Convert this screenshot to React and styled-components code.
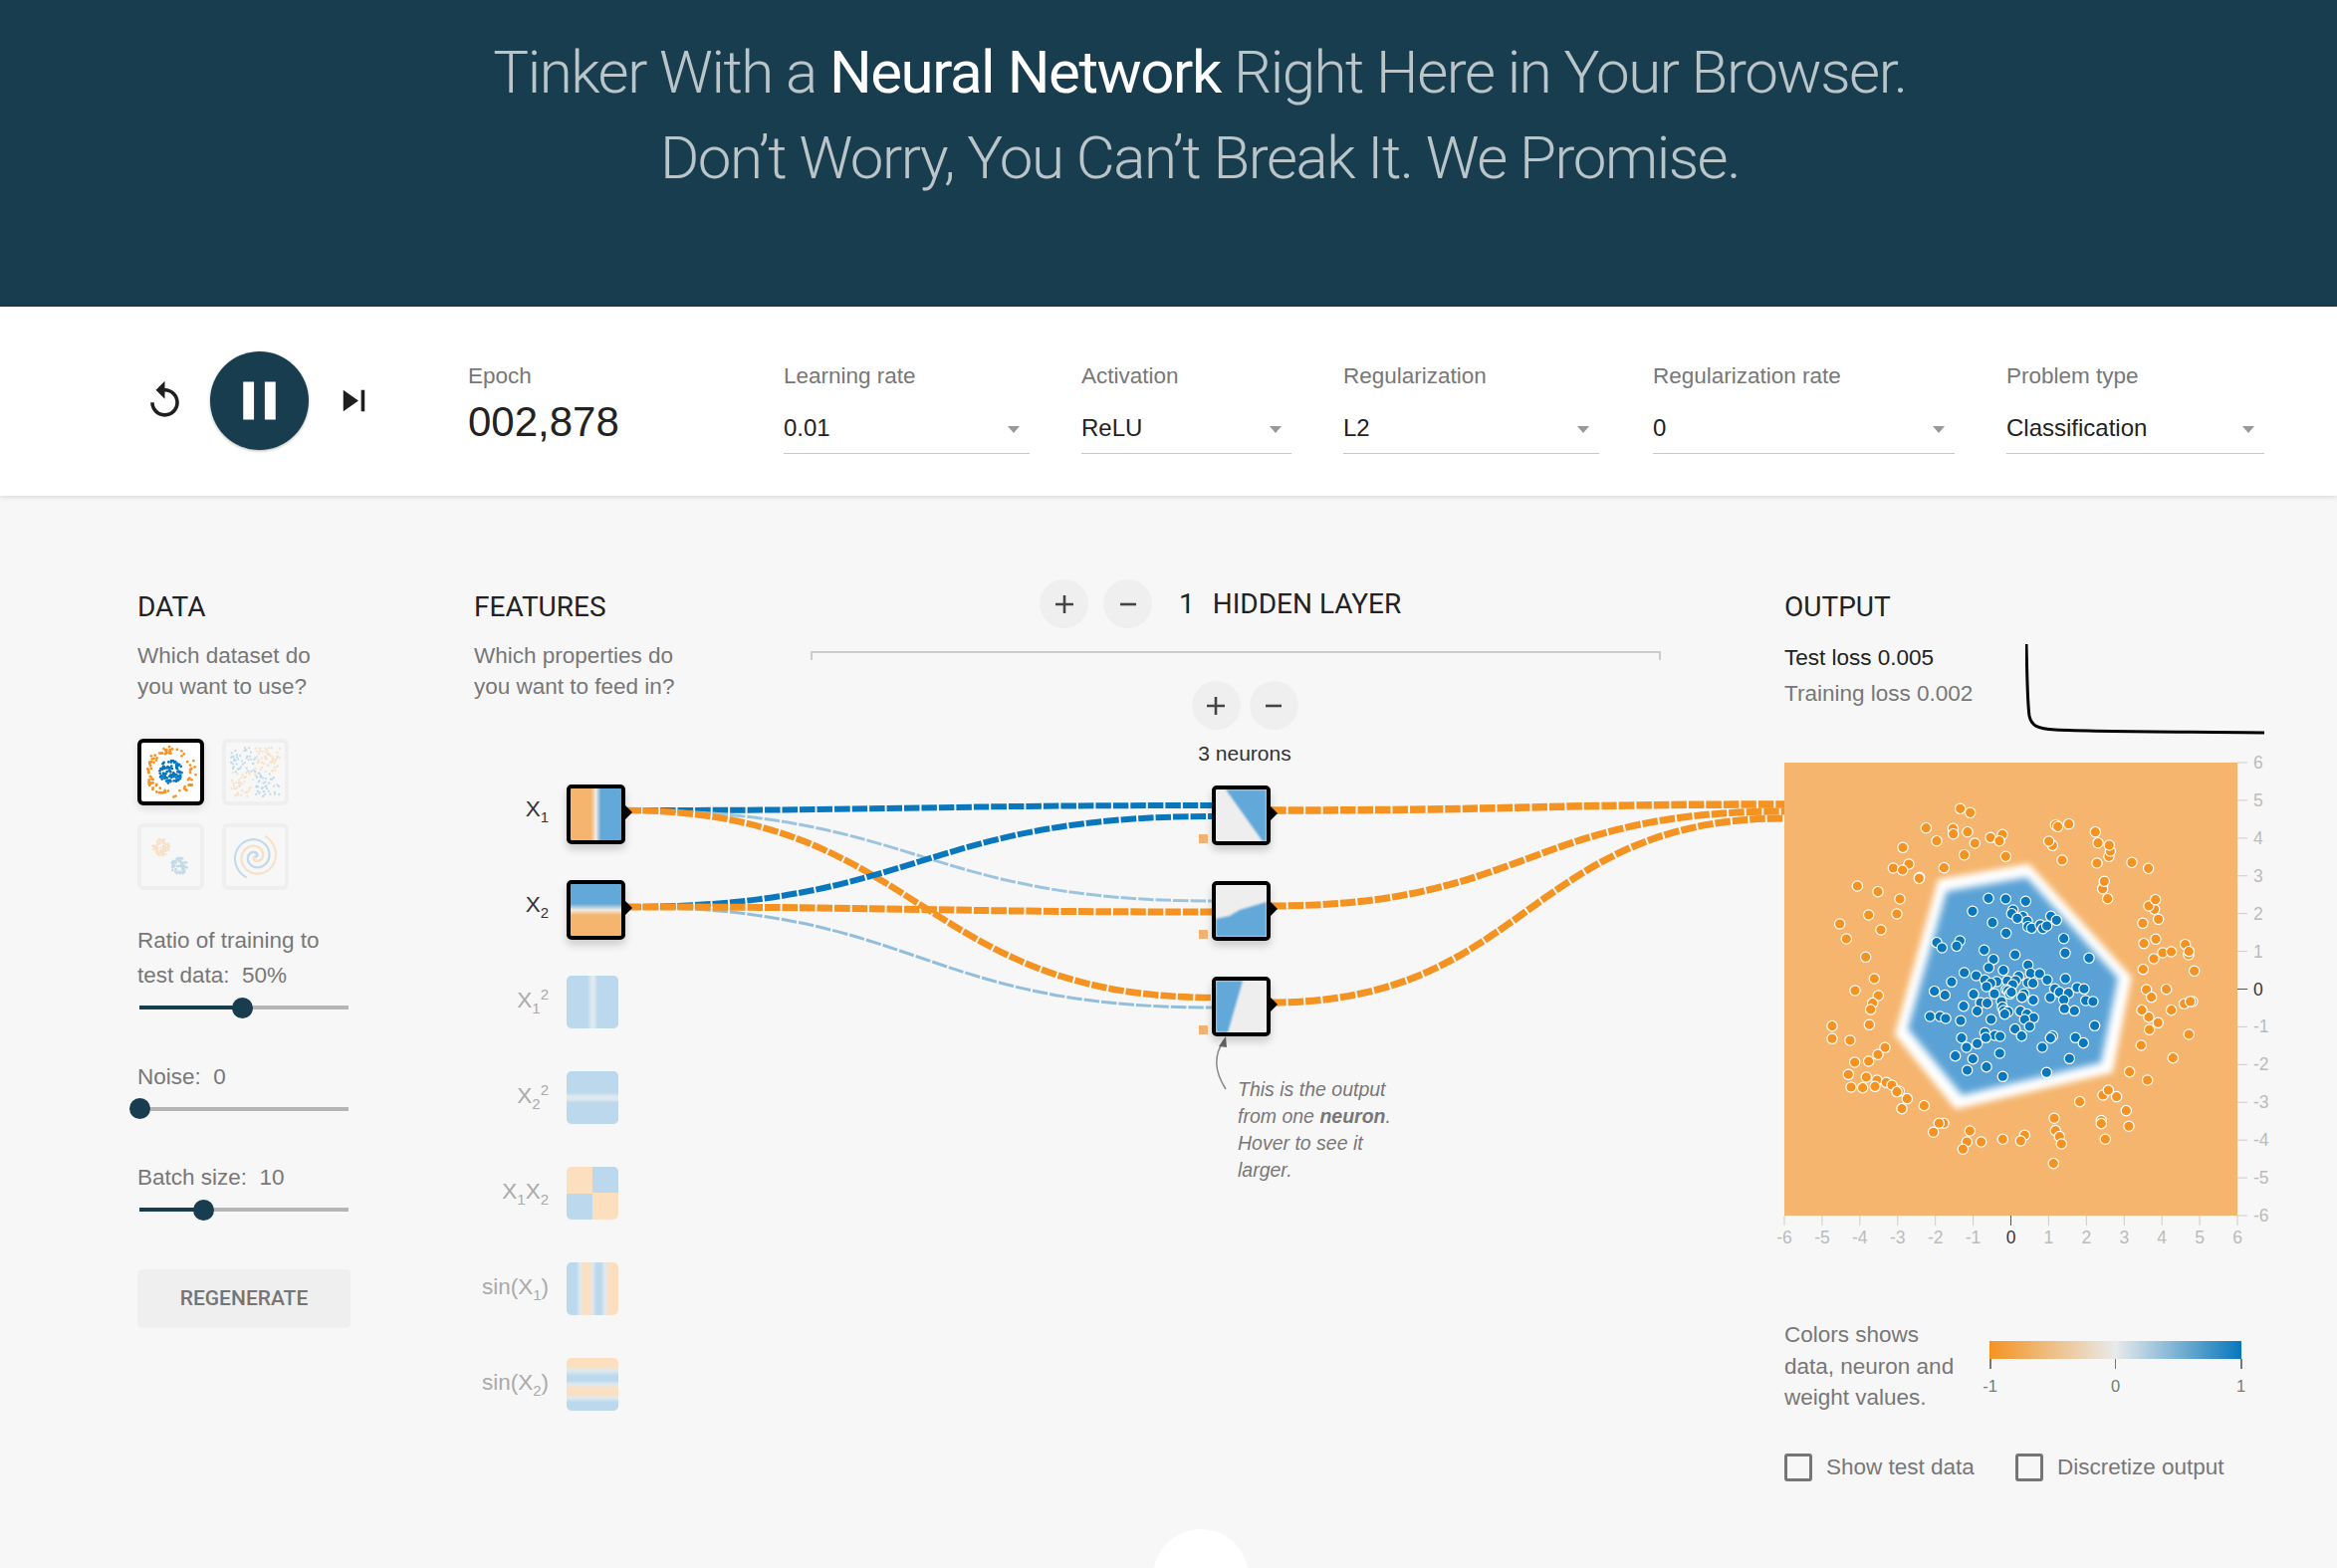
import React from "react";
import styled, { createGlobalStyle } from "styled-components";

const navy = "#183d4e";
const orange = "#f59322";
const blue = "#0877bd";
const softOrange = "#f5b56e";
const softBlue = "#62a8d8";
const paleOrange = "#fbdfbf";
const paleBlue = "#bcd8ec";
const paleMid = "#dfe9f0";
const headFont = `Roboto, "Liberation Sans", sans-serif`;

const Global = createGlobalStyle`
  html, body { margin: 0; padding: 0; background: #f7f7f7; }
  body { font-family: "Liberation Sans", Arial, sans-serif; }
  * { box-sizing: border-box; }
`;

const Page = styled.div`
  position: relative;
  width: 2347px;
  height: 1575px;
  overflow: hidden;
  background: #f7f7f7;
`;

const Header = styled.header`
  height: 308px;
  padding: 30px 0 0 63px;
  background: ${navy};
`;

const Title = styled.h1`
  margin: 0;
  font-family: ${headFont};
  font-size: 60px;
  line-height: 86px;
  font-weight: 300;
  letter-spacing: -1.45px;
  text-align: center;
  color: rgba(255, 255, 255, 0.7);
  b { font-weight: 400; color: #fff; }
`;

const ControlBar = styled.section`
  display: flex;
  height: 190px;
  padding: 45px 0 0 144px;
  background: #fff;
  box-shadow: 0 1px 5px rgba(0, 0, 0, 0.14);
  position: relative;
`;

const Playback = styled.div`
  display: flex;
  align-items: center;
  height: 99px;
  width: 326px;
  gap: 24px;
`;

const IconButton = styled.svg`
  width: 43px;
  height: 43px;
  flex: none;
  fill: #1f1f1f;
`;

const PauseButton = styled.div`
  display: flex;
  align-items: center;
  justify-content: center;
  width: 99px;
  height: 99px;
  border-radius: 50%;
  background: ${navy};
  box-shadow: 0 1px 3px rgba(0, 0, 0, 0.3);
  svg { width: 65px; height: 65px; fill: #fff; }
`;

const Field = styled.div`
  width: ${(p) => p.$width}px;
  margin-right: ${(p) => p.$gap}px;
  flex: none;
  padding-top: 11px;
`;

const FieldLabel = styled.div`
  font-size: 22.5px;
  line-height: 28px;
  color: #777;
`;

const EpochValue = styled.div`
  margin-top: 7px;
  font-size: 42px;
  line-height: 50px;
  color: #222;
`;

const SelectBox = styled.div`
  display: flex;
  align-items: center;
  justify-content: space-between;
  height: 52px;
  margin-top: 12px;
  padding: 0 10px 0 0;
  font-size: 24px;
  color: #222;
  border-bottom: 1.5px solid #c8c8c8;
`;

const Caret = styled.span`
  width: 0;
  height: 0;
  margin-top: 4px;
  border-left: 6px solid transparent;
  border-right: 6px solid transparent;
  border-top: 7px solid #999;
`;

const Main = styled.main`
  display: flex;
  padding: 84px 0 0 138px;
`;

const Column = styled.div`
  flex: none;
  width: ${(p) => p.$width}px;
  padding-top: 12px;
`;

const Heading = styled.h4`
  margin: 0;
  font-family: ${headFont};
  font-size: 28px;
  line-height: 32px;
  font-weight: 400;
  color: #222;
`;

const Description = styled.p`
  margin: 17px 0 0;
  font-size: 22.5px;
  line-height: 31px;
  color: #777;
`;

const ThumbGrid = styled.div`
  display: grid;
  grid-template-columns: 67px 67px;
  gap: 18px;
  margin-top: 37px;
`;

const Thumb = styled.div`
  width: 67px;
  height: 67px;
  padding: ${(p) => (p.$selected ? 0 : 1)}px;
  border: 4px solid ${(p) => (p.$selected ? "#000" : "#efefef")};
  border-radius: 6px;
  background: ${(p) => (p.$selected ? "#fff" : "transparent")};
  box-shadow: ${(p) => (p.$selected ? "0 3px 8px rgba(0,0,0,.12)" : "none")};
  svg { display: block; width: 100%; height: 100%; opacity: ${(p) => (p.$selected ? 1 : 0.22)}; }
`;

const ControlLabel = styled.div`
  margin-top: ${(p) => p.$top}px;
  font-size: 22.5px;
  line-height: 35px;
  color: #777;
  white-space: pre;
`;

const Slider = styled.div`
  position: relative;
  width: 210px;
  height: 21px;
  margin: 4.5px 0 0 2px;
  display: flex;
  align-items: center;
`;

const Track = styled.div`
  width: 100%;
  height: 4px;
  background: #b5b5b5;
`;

const TrackFill = styled.div`
  height: 100%;
  background: ${navy};
`;

const Thumbnail = styled.div`
  position: absolute;
  top: 0;
  width: 21px;
  height: 21px;
  margin-left: -10.5px;
  border-radius: 50%;
  background: ${navy};
`;

const PlainButton = styled.button`
  display: block;
  width: 214px;
  height: 59px;
  margin-top: 49px;
  border: 0;
  border-radius: 5px;
  background: #efefef;
  font-family: ${headFont};
  font-size: 21px;
  font-weight: 500;
  color: #757575;
`;

const Network = styled.div`
  position: relative;
  display: flex;
  flex: none;
  width: 1316px;
`;

const LinkLayer = styled.svg`
  position: absolute;
  left: 0;
  top: 0;
  width: 1316px;
  height: 900px;
  pointer-events: none;
`;

const FeatureColumn = styled(Column)`
  position: relative;
  width: 338px;
`;

const FeatureList = styled.div`
  margin-top: 83px;
`;

const FeatureRow = styled.div`
  display: flex;
  height: 96px;
`;

const FeatureLabel = styled.div`
  width: 75px;
  margin-right: 18px;
  text-align: right;
  font-size: 22.5px;
  line-height: 49px;
  white-space: nowrap;
  color: ${(p) => (p.$active ? "#333" : "#aaa")};
  sub, sup { font-size: 15px; line-height: 0; }
`;

const Node = styled.div`
  position: relative;
  width: ${(p) => (p.$active ? 59 : 52)}px;
  height: ${(p) => (p.$active ? 60 : 53)}px;
  border: ${(p) => (p.$active ? "4px solid #000" : "0")};
  border-radius: 5px;
  background: ${(p) => p.$fill};
  box-shadow: ${(p) => (p.$active ? "0 5px 8px rgba(0,0,0,.18)" : "none")};
  svg { display: block; width: 100%; height: 100%; border-radius: 2px; }
  ${(p) =>
    p.$active &&
    `&::after {
      content: "";
      position: absolute;
      right: -11px;
      top: 17px;
      border-left: 7px solid #000;
      border-top: 7px solid transparent;
      border-bottom: 7px solid transparent;
    }`}
`;

const BiasMark = styled.span`
  position: absolute;
  left: -17px;
  bottom: -2px;
  width: 9px;
  height: 9px;
  background: #f2b272;
`;

const HiddenColumn = styled.div`
  position: relative;
  flex: none;
  width: 854px;
`;

const LayerHeader = styled.div`
  display: flex;
  align-items: center;
  height: 49px;
  padding-left: 230px;
  gap: 15px;
  font-family: ${headFont};
  font-size: 28px;
  color: #222;
`;

const RoundButton = styled.div`
  display: flex;
  align-items: center;
  justify-content: center;
  flex: none;
  width: 49px;
  height: 49px;
  border-radius: 50%;
  background: #efefef;
  svg { width: 24px; height: 24px; stroke: #444; stroke-width: 2.6; }
`;

const LayerCount = styled.span`
  margin: 0 3px 0 12px;
`;

const Bracket = styled.div`
  height: 9px;
  margin-top: 23px;
  border: 2px solid #ccc;
  border-bottom: 0;
`;

const Layer = styled.div`
  width: 120px;
  margin: 21px 0 0 376px;
`;

const NeuronButtons = styled.div`
  display: flex;
  justify-content: center;
  gap: 9px;
`;

const NeuronCount = styled.div`
  margin-top: 12px;
  font-size: 21px;
  line-height: 24px;
  text-align: center;
  white-space: nowrap;
  color: #333;
`;

const NodeStack = styled.div`
  margin-top: 20px;
  padding-left: 27px;
`;

const NodeSlot = styled.div`
  height: 96px;
`;

const Callout = styled.p`
  margin: 4px 0 0 53px;
  width: 200px;
  font-size: 19.5px;
  line-height: 27px;
  font-style: italic;
  color: #777;
  b { font-weight: 700; }
`;

const LossRow = styled.div`
  display: flex;
  height: 123px;
  margin-top: 17px;
`;

const LossText = styled.div`
  width: 242px;
  font-size: 22.5px;
  line-height: 35.5px;
  color: ${(p) => p.$color || "#777"};
`;

const LossChart = styled.svg`
  display: block;
  flex: none;
  width: 240px;
  height: 95px;
  fill: none;
  stroke: #000;
  stroke-width: 3;
`;

const HeatWrap = styled.div`
  width: 455px;
  height: 455px;
  svg { display: block; width: 455px; height: 455px; overflow: visible; }
  text { font-family: "Liberation Sans", Arial, sans-serif; font-size: 17.5px; }
`;

const Legend = styled.div`
  display: flex;
  margin-top: 104px;
`;

const LegendText = styled.div`
  width: 206px;
  font-size: 22.5px;
  line-height: 31.5px;
  white-space: nowrap;
  color: #777;
`;

const LegendScale = styled.div`
  width: 253px;
  padding-top: 22px;
`;

const LegendBar = styled.div`
  height: 18px;
  background: linear-gradient(90deg, ${orange}, #e8eaeb 50%, ${blue});
`;

const LegendTicks = styled.div`
  display: flex;
  justify-content: space-between;
`;

const LegendTick = styled.div`
  display: flex;
  flex-direction: column;
  align-items: center;
  width: 1px;
  font-size: 16.5px;
  line-height: 18px;
  color: #777;
  &::before {
    content: "";
    flex: none;
    width: ${(p) => (p.$thick ? 2 : 1)}px;
    height: 10px;
    margin-bottom: 8px;
    background: #777;
  }
`;

const Checks = styled.div`
  display: flex;
  margin-top: 40px;
`;

const CheckItem = styled.label`
  display: flex;
  align-items: center;
  width: ${(p) => p.$width}px;
  height: 28px;
  font-size: 22.5px;
  color: #777;
`;

const CheckBox = styled.span`
  flex: none;
  width: 28px;
  height: 28px;
  margin-right: 14px;
  border: 3.5px solid #757575;
  border-radius: 3px;
`;

const FooterNub = styled.div`
  position: absolute;
  left: 1158px;
  top: 1536px;
  width: 96px;
  height: 96px;
  border-radius: 50%;
  background: #fff;
`;

// seeded points so the thumbnails stay the same on each load
function makeRandom(seed) {
  let a = seed;
  return () => {
    a = (a + 0x6d2b79f5) | 0;
    let t = Math.imul(a ^ (a >>> 15), 1 | a);
    t = (t + Math.imul(t ^ (t >>> 7), 61 | t)) ^ t;
    return ((t ^ (t >>> 14)) >>> 0) / 4294967296;
  };
}

function scatter(seed, count, pick) {
  const rnd = makeRandom(seed);
  return Array.from({ length: count }, (_, i) => pick(rnd, i));
}

const circleData = scatter(11, 180, (r, i) => {
  const a = r() * Math.PI * 2;
  const outer = i % 2 === 0;
  const d = outer ? 19 + r() * 7 : Math.sqrt(r()) * 12;
  return [30 + Math.cos(a) * d, 30 + Math.sin(a) * d, outer ? orange : blue];
});

const xorData = scatter(23, 190, (r) => {
  const x = 4 + r() * 52;
  const y = 4 + r() * 52;
  return [x, y, x < 30 === y < 30 ? blue : orange];
});

const gaussData = scatter(37, 170, (r, i) => {
  const a = r() * Math.PI * 2;
  const d = Math.sqrt(r()) * 9;
  const o = i % 2 === 0;
  return [(o ? 20 : 39) + Math.cos(a) * d, (o ? 20 : 40) + Math.sin(a) * d, o ? orange : blue];
});

const spiralData = scatter(41, 300, (r, i) => {
  const t = (i / 300) * 2;
  const o = i % 2 === 0;
  const k = t * 1.75 * Math.PI + (o ? Math.PI : 0) - 0.4;
  const d = t * 12;
  return [30 + Math.cos(k) * d, 30 - Math.sin(k) * d, o ? orange : blue];
});

const datasets = [
  { key: "circle", points: circleData, size: 1.4 },
  { key: "xor", points: xorData, size: 1.2 },
  { key: "gauss", points: gaussData, size: 1.2 },
  { key: "spiral", points: spiralData, size: 1.2 },
];

const features = [
  { main: "X", sub: "1", active: true, fill: `linear-gradient(90deg, ${softOrange} 40%, #f0ebe4 50%, ${softBlue} 60%)` },
  { main: "X", sub: "2", active: true, fill: `linear-gradient(180deg, ${softBlue} 38%, #f0ebe4 50%, ${softOrange} 60%)` },
  { main: "X", sub: "1", sup: "2", fill: `linear-gradient(90deg, ${paleBlue} 40%, ${paleMid} 48%, ${paleMid} 53%, ${paleBlue} 60%)` },
  { main: "X", sub: "2", sup: "2", fill: `linear-gradient(180deg, ${paleBlue} 40%, ${paleMid} 48%, ${paleMid} 53%, ${paleBlue} 60%)` },
  { main: "X", sub: "1", after: "X", subAfter: "2", fill: `conic-gradient(${paleBlue} 0 25%, ${paleOrange} 25% 50%, ${paleBlue} 50% 75%, ${paleOrange} 75%)` },
  {
    main: "sin(X",
    sub: "1",
    close: ")",
    fill: `linear-gradient(90deg, ${paleBlue} 18%, ${paleMid} 26%, ${paleOrange} 34%, ${paleOrange} 44%, ${paleMid} 50%, ${paleBlue} 58%, ${paleBlue} 66%, ${paleMid} 74%, ${paleOrange} 82%)`,
  },
  {
    main: "sin(X",
    sub: "2",
    close: ")",
    fill: `linear-gradient(180deg, ${paleOrange} 16%, ${paleMid} 24%, ${paleBlue} 34%, ${paleBlue} 42%, ${paleMid} 50%, ${paleOrange} 58%, ${paleOrange} 68%, ${paleMid} 76%, ${paleBlue} 84%)`,
  },
];

const neuronShapes = ["10,0 51,0 51,52 47,52", "0,34 14,31 24,25 51,17 51,52 0,52", "0,0 27,0 12,52 0,52"];

function link(x0, y0, x1, y1) {
  const mid = (x0 + x1) / 2;
  return `M${x0},${y0} C${mid},${y0} ${mid},${y1} ${x1},${y1}`;
}

const links = [
  { d: link(628, 814, 1218, 809), color: blue, width: 6 },
  { d: link(628, 814, 1218, 905), color: "#9cc4de", width: 3 },
  { d: link(628, 814, 1218, 1002), color: orange, width: 6.5 },
  { d: link(628, 911, 1218, 1012), color: "#93bedb", width: 3 },
  { d: link(628, 911, 1218, 820), color: blue, width: 6 },
  { d: link(628, 911, 1218, 916), color: orange, width: 7 },
  { d: link(1276, 814, 1792, 808), color: orange, width: 7.5 },
  { d: link(1276, 910, 1792, 815), color: orange, width: 7 },
  { d: link(1276, 1007, 1792, 822), color: orange, width: 7 },
];

const orangePoints = [[566,217],[596,229],[463,275],[544,277],[545,293],[588,287],[495,314],[610,321],[657,304],[693,295],[684,314],[703,361],[578,356],[393,334],[411,384],[364,396],[392,402],[517,395],[443,424],[442,427],[256,450],[318,467],[384,489],[290,537],[375,534],[203,564],[223,609],[327,582],[281,664],[307,729],[249,765],[319,780],[302,803],[296,822],[292,868],[180,872],[180,910],[234,915],[339,937],[318,958],[290,978],[248,981],[229,1018],[283,1026],[315,1035],[343,1042],[360,1050],[237,1056],[272,1058],[309,1054],[382,1068],[375,1070],[406,1091],[390,1121],[457,1112],[516,1165],[502,1165],[485,1192],[595,1188],[586,1221],[574,1243],[629,1221],[694,1213],[760,1201],[748,1218],[849,1150],[853,1187],[865,1205],[871,1227],[847,1286],[926,1100],[996,1080],[1012,1065],[1037,1085],[1066,1127],[1074,1174],[991,1157],[991,1166],[1003,1213],[1076,1010],[1130,1035],[1207,968],[1111,930],[1255,897],[1136,883],[1162,862],[1134,845],[1113,824],[1202,824],[1241,805],[1266,798],[1259,798],[1127,762],[1142,785],[1187,761],[1117,701],[1271,706],[1149,669],[1176,651],[1202,648],[1244,626],[1254,657],[1255,647],[1119,623],[1155,610],[1116,562],[1163,550],[1151,520],[1134,510],[1154,491],[1010,488],[995,458],[1000,436],[1133,397],[1083,379],[978,381],[1014,361],[1018,345],[1015,327],[981,320],[973,287],[873,372],[844,328],[833,315],[853,266],[860,271],[893,263]];

const bluePoints = [[651,487],[703,489],[763,496],[603,526],[725,522],[721,533],[755,542],[738,547],[663,560],[768,556],[770,572],[781,577],[807,567],[815,578],[827,570],[839,541],[856,553],[704,592],[878,608],[565,615],[555,631],[495,620],[511,636],[638,643],[731,657],[882,652],[954,667],[666,671],[770,688],[652,696],[696,704],[578,711],[614,720],[778,713],[805,714],[742,722],[640,733],[676,738],[540,739],[658,743],[708,736],[733,735],[724,747],[770,741],[785,743],[828,733],[883,729],[645,753],[488,767],[520,779],[669,775],[606,776],[705,762],[710,765],[715,775],[720,770],[758,775],[752,785],[851,760],[865,770],[892,773],[918,756],[939,760],[837,786],[878,793],[944,795],[966,798],[786,794],[627,802],[647,803],[690,798],[693,815],[697,825],[576,812],[617,827],[880,820],[910,826],[747,827],[767,836],[710,829],[700,836],[787,847],[760,852],[475,843],[505,843],[522,849],[567,856],[659,852],[731,881],[775,873],[971,871],[640,892],[670,900],[686,903],[643,907],[751,902],[570,908],[844,902],[838,908],[913,907],[937,923],[617,925],[585,936],[813,936],[685,954],[551,962],[604,971],[895,970],[645,995],[587,1005],[826,1012],[694,1024]];

const hull = [[510,445],[770,400],[1065,725],[1010,1000],[560,1105],[385,890]];
const hullString = (k) => hull.map(([x, y]) => `${720 + (x - 720) * k},${750 + (y - 750) * k}`).join(" ");
const axisValues = [-6, -5, -4, -3, -2, -1, 0, 1, 2, 3, 4, 5, 6];

function HeatMap() {
  const pos = (v) => ((v + 6) / 12) * 455;
  return (
    <HeatWrap>
      <svg viewBox="0 0 455 455">
        <defs>
          <filter id="glow" x="-20%" y="-20%" width="140%" height="140%"><feGaussianBlur stdDeviation="10" /></filter>
          <filter id="soft" x="-20%" y="-20%" width="140%" height="140%"><feGaussianBlur stdDeviation="11" /></filter>
        </defs>
        <rect width="455" height="455" fill="#f5b56e" />
        <g transform="translate(-12 -26) scale(.3333)">
          <polygon points={hullString(1.05)} fill="#fff" filter="url(#glow)" />
          <polygon points={hullString(0.93)} fill="#5aa2d5" filter="url(#soft)" />
          {bluePoints.map(([x, y], i) => <circle key={i} cx={x} cy={y} r="15.5" fill={blue} stroke="#fff" strokeWidth="3.6" />)}
          {orangePoints.map(([x, y], i) => <circle key={i} cx={x} cy={y} r="15.5" fill={orange} stroke="#fff" strokeWidth="3.6" />)}
        </g>
        {axisValues.map((v) => {
          const dark = v === 0;
          const color = dark ? "#333" : "#bbb";
          return (
            <g key={v}>
              <line x1={pos(v)} x2={pos(v)} y1="455" y2="465" stroke={dark ? "#555" : "#ccc"} />
              <text x={pos(v)} y="483" textAnchor="middle" fill={color}>{v}</text>
              <line x1="455" x2="465" y1={455 - pos(v)} y2={455 - pos(v)} stroke={dark ? "#555" : "#ccc"} />
              <text x="471" y={455 - pos(v) + 6} fill={color}>{v}</text>
            </g>
          );
        })}
      </svg>
    </HeatWrap>
  );
}

function SliderControl({ value, fill }) {
  return (
    <Slider>
      <Track>{fill && <TrackFill style={{ width: `${value}%` }} />}</Track>
      <Thumbnail style={{ left: `${value}%` }} />
    </Slider>
  );
}

function FeatureName({ f }) {
  return (
    <FeatureLabel $active={f.active}>
      {f.main}<sub>{f.sub}</sub>
      {f.sup && <sup>{f.sup}</sup>}
      {f.after}{f.subAfter && <sub>{f.subAfter}</sub>}
      {f.close}
    </FeatureLabel>
  );
}

const selects = [
  { label: "Learning rate", value: "0.01", width: 247, gap: 52 },
  { label: "Activation", value: "ReLU", width: 211, gap: 52 },
  { label: "Regularization", value: "L2", width: 257, gap: 54 },
  { label: "Regularization rate", value: "0", width: 303, gap: 52 },
  { label: "Problem type", value: "Classification", width: 259, gap: 0 },
];

const Plus = () => (
  <svg viewBox="0 0 24 24"><path d="M12 3v18M3 12h18" /></svg>
);
const Minus = () => (
  <svg viewBox="0 0 24 24"><path d="M4 12h16" /></svg>
);

export default function App() {
  return (
    <Page>
      <Global />
      <Header>
        <Title>
          Tinker With a <b>Neural Network</b> Right Here in Your Browser.
          <br />
          Don’t Worry, You Can’t Break It. We Promise.
        </Title>
      </Header>

      <ControlBar>
        <Playback>
          <IconButton viewBox="0 0 24 24">
            <path d="M12 5V1L7 6l5 5V7c3.31 0 6 2.69 6 6s-2.69 6-6 6-6-2.69-6-6H4c0 4.42 3.58 8 8 8s8-3.58 8-8-3.58-8-8-8z" />
          </IconButton>
          <PauseButton>
            <svg viewBox="0 0 24 24"><path d="M6 19h4V5H6v14zm8-14v14h4V5h-4z" /></svg>
          </PauseButton>
          <IconButton viewBox="0 0 24 24">
            <path d="M6 18l8.5-6L6 6v12zM16 6v12h2V6h-2z" />
          </IconButton>
        </Playback>
        <Field $width={317} $gap={0}>
          <FieldLabel>Epoch</FieldLabel>
          <EpochValue>002,878</EpochValue>
        </Field>
        {selects.map((s) => (
          <Field key={s.label} $width={s.width} $gap={s.gap}>
            <FieldLabel>{s.label}</FieldLabel>
            <SelectBox>{s.value}<Caret /></SelectBox>
          </Field>
        ))}
      </ControlBar>

      <Main>
        <Column $width={338}>
          <Heading>DATA</Heading>
          <Description>Which dataset do<br />you want to use?</Description>
          <ThumbGrid>
            {datasets.map((d, i) => (
              <Thumb key={d.key} $selected={i === 0}>
                <svg viewBox="0 0 60 60">
                  {d.points.map(([x, y, c], n) => <circle key={n} cx={x} cy={y} r={d.size} fill={c} />)}
                </svg>
              </Thumb>
            ))}
          </ThumbGrid>
          <ControlLabel $top={33}>{"Ratio of training to\ntest data:  50%"}</ControlLabel>
          <SliderControl value={49.5} fill />
          <ControlLabel $top={41}>{"Noise:  0"}</ControlLabel>
          <SliderControl value={0} />
          <ControlLabel $top={41}>{"Batch size:  10"}</ControlLabel>
          <SliderControl value={30.5} fill />
          <PlainButton>REGENERATE</PlainButton>
        </Column>

        <Network>
          <LinkLayer viewBox="476 582 1316 900" fill="none">
            {links.map((l, i) => (
              <path key={i} d={l.d} stroke={l.color} strokeWidth={l.width} strokeDasharray="15.5 2" />
            ))}
            <path d="M1231,1094 C1219,1075 1219,1060 1229,1045" stroke="#888" strokeWidth="1.5" />
            <path d="M1231,1041 L1224,1051 L1232,1052 Z" fill="#666" />
          </LinkLayer>

          <FeatureColumn>
            <Heading>FEATURES</Heading>
            <Description>Which properties do<br />you want to feed in?</Description>
            <FeatureList>
              {features.map((f, i) => (
                <FeatureRow key={i}>
                  <FeatureName f={f} />
                  <Node $active={f.active} $fill={f.fill} />
                </FeatureRow>
              ))}
            </FeatureList>
          </FeatureColumn>

          <HiddenColumn>
            <LayerHeader>
              <RoundButton><Plus /></RoundButton>
              <RoundButton><Minus /></RoundButton>
              <LayerCount>1</LayerCount>
              HIDDEN LAYER
            </LayerHeader>
            <Bracket />
            <Layer>
              <NeuronButtons>
                <RoundButton><Plus /></RoundButton>
                <RoundButton><Minus /></RoundButton>
              </NeuronButtons>
              <NeuronCount>3 neurons</NeuronCount>
              <NodeStack>
                {neuronShapes.map((shape) => (
                  <NodeSlot key={shape}>
                    <Node $active $fill="#eee">
                      <svg viewBox="0 0 51 52" preserveAspectRatio="none">
                        <polygon points={shape} fill="#62a8d8" style={{ filter: "blur(0.8px)" }} />
                      </svg>
                      <BiasMark />
                    </Node>
                  </NodeSlot>
                ))}
              </NodeStack>
              <Callout>
                This is the output<br />
                from one <b>neuron</b>.<br />
                Hover to see it<br />
                larger.
              </Callout>
            </Layer>
          </HiddenColumn>
        </Network>

        <Column $width={482}>
          <Heading>OUTPUT</Heading>
          <LossRow>
            <div>
              <LossText $color="#222">Test loss 0.005</LossText>
              <LossText>Training loss 0.002</LossText>
            </div>
            <LossChart viewBox="0 0 240 95">
              <path d="M1,4 C2,42 2,62 4,76 C6,86 12,89 30,90 C70,92 150,92 240,93" />
            </LossChart>
          </LossRow>
          <HeatMap />
          <Legend>
            <LegendText>Colors shows<br />data, neuron and<br />weight values.</LegendText>
            <LegendScale>
              <LegendBar />
              <LegendTicks>
                <LegendTick $thick>-1</LegendTick>
                <LegendTick>0</LegendTick>
                <LegendTick $thick>1</LegendTick>
              </LegendTicks>
            </LegendScale>
          </Legend>
          <Checks>
            <CheckItem $width={232}><CheckBox />Show test data</CheckItem>
            <CheckItem $width={250}><CheckBox />Discretize output</CheckItem>
          </Checks>
        </Column>
      </Main>
      <FooterNub />
    </Page>
  );
}
